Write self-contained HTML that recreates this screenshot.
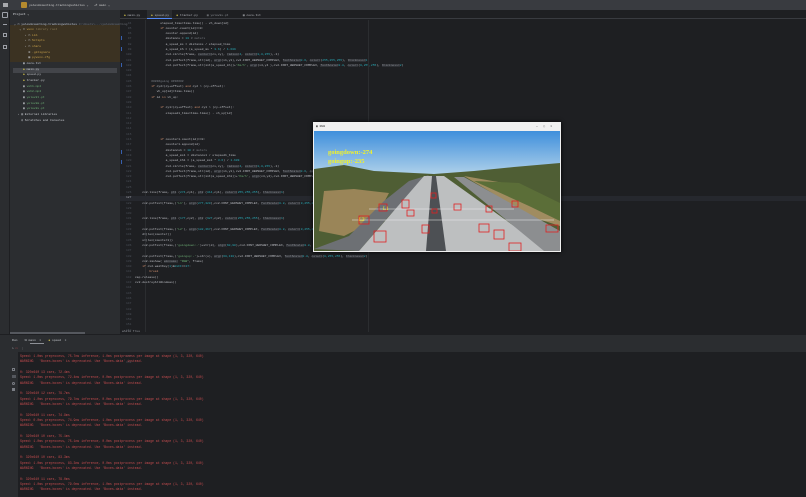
<!DOCTYPE html>
<html><head><meta charset="utf-8"><style>
*{margin:0;padding:0;box-sizing:border-box}
body{width:806px;height:497px;overflow:hidden;background:#1e1f22;font-family:"Liberation Mono",monospace;position:relative}
.a{position:absolute}
.t{position:absolute;white-space:pre;font-size:3px;line-height:5.3px}
.k{color:#cf8e6d}.s{color:#6aab73}.n{color:#2aacb8}.c{color:#7a7e85}.p{color:#8b8e94;background:#2e3035}
.w{color:#bcbec4}
.con{position:absolute;left:20px;white-space:pre;font-size:3.2px;line-height:5.33px;color:#c64c4f}
</style></head><body>
<!-- title bar -->
<div class="a" style="left:0;top:0;width:806px;height:10px;background:#393b40"></div>
<div class="a" style="left:3px;top:3px;width:5px;height:4px;background:#a8a9ad"></div>
<div class="a" style="left:21px;top:2px;width:6px;height:6px;background:#b58a2e;border-radius:1px"></div>
<div class="t" style="left:29px;top:2.5px;color:#d0d0d0">yolov8counting-trackingvehicles ⌄   ⎇ main ⌄</div>
<!-- left strip -->
<div class="a" style="left:0;top:10px;width:10px;height:487px;background:#2b2d30;border-right:1px solid #1e1f22"></div>
<div class="a" style="left:2px;top:12px;width:6px;height:6px;border:1px solid #9da0a8;border-radius:1px"></div>
<div class="a" style="left:3px;top:24px;width:4px;height:1px;background:#9da0a8"></div>
<div class="a" style="left:3px;top:33px;width:4px;height:4px;border:1px solid #9da0a8"></div>
<div class="a" style="left:3px;top:45px;width:4px;height:4px;border:1px solid #9da0a8"></div>
<div class="a" style="left:3px;top:439px;width:4px;height:4px;border:1px solid #8c8f96;border-radius:50%"></div>
<div class="a" style="left:3px;top:448px;width:4px;height:4px;border:1px solid #b0b3b9;background:#43454a"></div>
<div class="a" style="left:3px;top:458px;width:4px;height:4px;border:1px solid #8c8f96"></div>
<div class="a" style="left:3px;top:468px;width:4px;height:4px;border:1px solid #8c8f96;border-radius:50%"></div>
<div class="a" style="left:3px;top:478px;width:4px;height:4px;border:1px solid #8c8f96"></div>
<div class="a" style="left:3px;top:487px;width:4px;height:4px;border:1px solid #8c8f96;border-radius:50%"></div>
<!-- project panel -->
<div class="a" style="left:10px;top:10px;width:110px;height:324px;background:#2b2d30"></div>
<div class="a" style="left:10px;top:25px;width:110px;height:37px;background:#3b3222"></div>
<div class="a" style="left:13px;top:68px;width:104px;height:5px;background:#43454a"></div>
<div class="t" style="left:13px;top:12px;color:#dfe1e5">Project ⌄</div>
<div class="t" style="left:14px;top:21.5px;line-height:5.65px;color:#c9ccd1">⌄ ▭ yolov8counting-trackingvehicles <span style="color:#6f737a">C:\Users\...\yolov8counting</span>
   ⌄ ▭ <span style="color:#c9a24b">venv</span> <span style="color:#8a7a55">library root</span>
      › ▭ <span style="color:#c9a24b">Lib</span>
      › ▭ <span style="color:#c9a24b">Scripts</span>
      › ▭ <span style="color:#c9a24b">share</span>
        ⚙ <span style="color:#c9a24b">.gitignore</span>
        ▤ <span style="color:#c9a24b">pyvenv.cfg</span>
     ▤ coco.txt
     <span style="color:#d4c54a">◆</span> main.py
     <span style="color:#d4c54a">◆</span> speed.py
     <span style="color:#d4c54a">◆</span> tracker.py
     ▤ <span style="color:#6aab73">veh1.mp4</span>
     ▤ <span style="color:#6aab73">veh2.mp4</span>
     ▤ <span style="color:#6aab73">yolov8l.pt</span>
     ▤ <span style="color:#6aab73">yolov8m.pt</span>
     ▤ <span style="color:#6aab73">yolov8s.pt</span>
  › ▥ External Libraries
    ◎ Scratches and Consoles</div>
<div class="a" style="left:10px;top:332px;width:75px;height:2px;background:#55585e"></div>
<!-- editor -->
<div class="a" style="left:120px;top:10px;width:686px;height:9px;background:#1e1f22;border-bottom:1px solid #393b40"></div>
<div class="a" style="left:147px;top:10px;width:25px;height:9px;background:#2b2d30;border-bottom:1px solid #548af7"></div>
<div class="t" style="left:124px;top:12.5px;color:#b8bac0"><span style="color:#d4c54a">◆</span> main.py      <span style="color:#d4c54a">◆</span> speed.py    <span style="color:#d4c54a">◆</span> tracker.py     <span style="color:#8a8d93">▤ yolov8s.pt</span>        ▤ coco.txt</div>
<div class="a" style="left:145px;top:20px;width:1px;height:312px;background:#2b2d30"></div>
<div class="a" style="left:120px;top:196px;width:686px;height:5px;background:#26282e"></div>
<div class="a" style="left:121px;top:36px;width:1px;height:4px;background:#375fad"></div>
<div class="a" style="left:121px;top:47px;width:1px;height:4px;background:#375fad"></div>
<div class="a" style="left:121px;top:63px;width:1px;height:4px;background:#375fad"></div>
<div class="a" style="left:121px;top:150px;width:1px;height:4px;background:#375fad"></div>
<div class="a" style="left:121px;top:160px;width:1px;height:4px;background:#375fad"></div>
<div class="t" style="left:126px;top:20.5px;color:#4b5059"> 94
 95
 96
 97
 98
 99
100
101
102
103
104
105
106
107
108
109
110
111
112
113
114
115
116
117
118
119
120
121
122
123
124
125
126
<span style="color:#a1a3ab">127</span>
128
129
130
131
132
133
134
135
136
137
138
139
140
141
142
143
144
145
146
147
148
149
150
151
152
153
154
155
156
157
158</div>
<div class="t w" style="left:135px;top:20.5px">              elapsed_time=time.time() - vh_down[id]
              <span class="k">if</span> counter.count(id)==0:
                 counter.append(id)
                 distance = <span class="n">10</span> <span class="c"># meters</span>
                 a_speed_ms = distance / elapsed_time
                 a_speed_kh = (a_speed_ms * <span class="n">3.6</span>) / <span class="n">1.609</span>
                 cv2.circle(frame, <span class="p">center=</span>(cx,cy), <span class="p">radius=</span><span class="n">4</span>, <span class="p">color=</span>(<span class="n">0,0,255</span>),-1)
                 cv2.putText(frame,str(id), <span class="p">org=</span>(x1,y1),cv2.FONT_HERSHEY_COMPLEX, <span class="p">fontScale=</span><span class="n">0.6</span>, <span class="p">color=</span>(<span class="n">255,255,255</span>), <span class="p">thickness=</span><span class="n">1</span>)
                 cv2.putText(frame,str(int(a_speed_kh))+<span class="s">'Km/h'</span>, <span class="p">org=</span>(x4,y4 ),cv2.FONT_HERSHEY_COMPLEX, <span class="p">fontScale=</span><span class="n">0.8</span>, <span class="p">color=</span>(<span class="n">0,255,255</span>), <span class="p">thickness=</span><span class="n">2</span>)


         <span class="c">#####going UP#####</span>
         <span class="k">if</span> cy2&lt;(cy+offset) <span class="k">and</span> cy2 &gt; (cy-offset):
            vh_up[id]=time.time()
         <span class="k">if</span> id <span class="k">in</span> vh_up:

              <span class="k">if</span> cy1&lt;(cy+offset) <span class="k">and</span> cy1 &gt; (cy-offset):
                 elapsed1_time=time.time() - vh_up[id]




              <span class="k">if</span> counter1.count(id)==0:
                 counter1.append(id)
                 distance1 = <span class="n">10</span> <span class="c"># meters</span>
                 a_speed_ms1 = distance1 / elapsed1_time
                 a_speed_kh1 = (a_speed_ms1 * <span class="n">3.6</span>) / <span class="n">1.609</span>
                 cv2.circle(frame, <span class="p">center=</span>(cx,cy), <span class="p">radius=</span><span class="n">4</span>, <span class="p">color=</span>(<span class="n">0,0,255</span>),-1)
                 cv2.putText(frame,str(id), <span class="p">org=</span>(x1,y1),cv2.FONT_HERSHEY_COMPLEX, <span class="p">fontScale=</span><span class="n">0.6</span>, <span class="p">color=</span>(<span class="n">255,255,255</span>), <span class="p">thickness=</span><span class="n">1</span>)
                 cv2.putText(frame,str(int(a_speed_kh1))+<span class="s">'Km/h'</span>, <span class="p">org=</span>(x4,y4),cv2.FONT_HERSHEY_COMPLEX, <span class="p">fontScale=</span><span class="n">0.8</span>, <span class="p">color=</span>(<span class="n">0,255,255</span>), <span class="p">thickness=</span><span class="n">2</span>)


    cv2.line(frame, <span class="p">pt1</span> (<span class="n">274</span>,cy1), <span class="p">pt2</span> (<span class="n">814</span>,cy1), <span class="p">color=</span>(<span class="n">255,255,255</span>), <span class="p">thickness=</span><span class="n">1</span>)

    cv2.putText(frame,(<span class="s">'L1'</span>), <span class="p">org=</span>(<span class="n">277,320</span>),cv2.FONT_HERSHEY_COMPLEX, <span class="p">fontScale=</span><span class="n">0.8</span>, <span class="p">color=</span>(<span class="n">0,255,255</span>), <span class="p">thickness=</span><span class="n">2</span>)


    cv2.line(frame, <span class="p">pt1</span> (<span class="n">177</span>,cy2), <span class="p">pt2</span> (<span class="n">927</span>,cy2), <span class="p">color=</span>(<span class="n">255,255,255</span>), <span class="p">thickness=</span><span class="n">1</span>)

    cv2.putText(frame,(<span class="s">'L2'</span>), <span class="p">org=</span>(<span class="n">182,367</span>),cv2.FONT_HERSHEY_COMPLEX, <span class="p">fontScale=</span><span class="n">0.8</span>, <span class="p">color=</span>(<span class="n">0,255,255</span>), <span class="p">thickness=</span><span class="n">2</span>)
    d=(len(counter))
    u=(len(counter1))
    cv2.putText(frame,(<span class="s">'goingdown:-'</span>)+str(d), <span class="p">org=</span>(<span class="n">60,90</span>),cv2.FONT_HERSHEY_COMPLEX, <span class="p">fontScale=</span><span class="n">0.8</span>, <span class="p">color=</span>(<span class="n">0,255,255</span>), <span class="p">thickness=</span><span class="n">2</span>)

    cv2.putText(frame,(<span class="s">'goingup:-'</span>)+str(u), <span class="p">org=</span>(<span class="n">60,130</span>),cv2.FONT_HERSHEY_COMPLEX, <span class="p">fontScale=</span><span class="n">0.8</span>, <span class="p">color=</span>(<span class="n">0,255,255</span>), <span class="p">thickness=</span><span class="n">2</span>)
    cv2.imshow( <span class="p">winname:</span> <span class="s">"RGB"</span>, frame)
    <span class="k">if</span> cv2.waitKey(<span class="n">1</span>)&amp;<span class="n">0xFF</span>==<span class="n">27</span>:
        <span class="k">break</span>
cap.release()
cv2.destroyAllWindows()</div>
<div class="a" style="left:368px;top:20px;width:1px;height:312px;background:#2b2d30"></div>
<div class="t" style="left:122px;top:328.5px;color:#9a9da3">while True</div>
<!-- run panel -->
<div class="a" style="left:0;top:334px;width:806px;height:18px;background:#2b2d30;border-top:1px solid #1e1f22"></div>
<div class="a" style="left:10px;top:333px;width:44px;height:1px;background:#55585e"></div>
<div class="t" style="left:12px;top:337.5px;color:#c9ccd1">Run    ⧉ main  ×    <span style="color:#d4c54a">◆</span> speed  ×</div>
<div class="a" style="left:30px;top:343px;width:14px;height:1px;background:#8d9096"></div>
<div class="t" style="left:12px;top:346px;color:#8c8f96">↻ <span style="color:#c64c4f">◻</span>  ⋮</div>
<div class="a" style="left:0;top:352px;width:18px;height:145px;background:#2b2d30"></div>
<div class="a" style="left:12px;top:368px;width:3px;height:3px;border:1px solid #7a7d84"></div>
<div class="a" style="left:12px;top:375px;width:4px;height:3px;background:#55585e"></div>
<div class="a" style="left:12px;top:382px;width:3px;height:3px;border:1px solid #7a7d84;border-radius:50%"></div>
<div class="a" style="left:12px;top:388px;width:3px;height:3px;background:#7a7d84"></div>
<div class="con" style="top:354px">Speed: 1.0ms preprocess, 75.7ms inference, 1.0ms postprocess per image at shape (1, 3, 320, 640)
WARNING   'Boxes.boxes' is deprecated. Use 'Boxes.data' instead.

0: 320x640 13 cars, 72.4ms
Speed: 1.0ms preprocess, 72.4ms inference, 0.0ms postprocess per image at shape (1, 3, 320, 640)
WARNING   'Boxes.boxes' is deprecated. Use 'Boxes.data' instead.

0: 320x640 12 cars, 79.7ms
Speed: 1.0ms preprocess, 79.7ms inference, 0.0ms postprocess per image at shape (1, 3, 320, 640)
WARNING   'Boxes.boxes' is deprecated. Use 'Boxes.data' instead.

0: 320x640 11 cars, 74.9ms
Speed: 0.0ms preprocess, 74.9ms inference, 1.0ms postprocess per image at shape (1, 3, 320, 640)
WARNING   'Boxes.boxes' is deprecated. Use 'Boxes.data' instead.

0: 320x640 10 cars, 75.1ms
Speed: 1.0ms preprocess, 75.1ms inference, 0.0ms postprocess per image at shape (1, 3, 320, 640)
WARNING   'Boxes.boxes' is deprecated. Use 'Boxes.data' instead.

0: 320x640 10 cars, 83.3ms
Speed: 1.0ms preprocess, 83.3ms inference, 0.0ms postprocess per image at shape (1, 3, 320, 640)
WARNING   'Boxes.boxes' is deprecated. Use 'Boxes.data' instead.

0: 320x640 11 cars, 79.0ms
Speed: 1.0ms preprocess, 79.0ms inference, 1.0ms postprocess per image at shape (1, 3, 320, 640)
WARNING   'Boxes.boxes' is deprecated. Use 'Boxes.data' instead.</div>
<!-- RGB window -->
<div class="a" style="left:313px;top:122px;width:248px;height:130px;background:#f0f0f0;box-shadow:0 0 4px #000"></div>
<div class="t" style="left:316px;top:124px;color:#333">▣ RGB</div>
<div class="t" style="left:536px;top:124px;color:#444">─   ▢   ✕</div>
<svg class="a" style="left:314px;top:131px" width="246" height="120" viewBox="0 0 246 120">
<defs><linearGradient id="sky" x1="0" y1="0" x2="0" y2="1"><stop offset="0" stop-color="#3f8fdc"/><stop offset="1" stop-color="#b3d3ea"/></linearGradient></defs>
<rect width="246" height="45" fill="url(#sky)"/>
<polygon points="0,38 30,34 60,40 120,43 160,40 200,36 246,32 246,120 0,120" fill="#4f5e34"/>
<polygon points="10,60 40,58 75,62 60,90 30,105 5,100" fill="#9a8558"/>
<polygon points="150,45 190,52 215,70 246,82 246,95 215,85 175,60" fill="#a08c60"/>
<polygon points="0,118 35,105 70,70 95,50 115,44 75,85 45,120" fill="#6d7074"/>
<polygon points="45,120 110,45 130,45 235,120" fill="#bdbfc0"/>
<polygon points="112,120 118,45 122,45 132,120" fill="#4d5054"/>
<polygon points="230,120 140,46 150,46 246,100 246,120" fill="#8c8e90"/>
<polygon points="160,50 205,52 246,72 246,90 215,75" fill="#5b6e38"/>
<line x1="55" y1="78" x2="200" y2="78" stroke="#eee" stroke-width="0.6"/>
<line x1="38" y1="89" x2="240" y2="89" stroke="#eee" stroke-width="0.6"/>
<g fill="none" stroke="#e02020" stroke-width="0.8">
<rect x="60" y="100" width="12" height="11"/><rect x="45" y="85" width="10" height="8"/><rect x="65" y="73" width="8" height="7"/>
<rect x="88" y="69" width="7" height="8"/><rect x="108" y="94" width="7" height="8"/><rect x="165" y="93" width="10" height="8"/>
<rect x="180" y="99" width="10" height="9"/><rect x="140" y="73" width="7" height="6"/><rect x="172" y="75" width="6" height="6"/>
<rect x="195" y="112" width="12" height="8"/><rect x="198" y="70" width="6" height="6"/><rect x="232" y="94" width="12" height="7"/>
<rect x="93" y="79" width="7" height="6"/><rect x="118" y="78" width="5" height="4"/><rect x="117" y="62" width="5" height="5"/>
</g>
<text x="14" y="23" font-family="Liberation Serif" font-size="6.5" fill="#f2f22a" font-weight="bold">goingdown:-274</text>
<text x="14" y="32" font-family="Liberation Serif" font-size="6.5" fill="#f2f22a" font-weight="bold">goingup:-235</text>
<text x="69" y="79" font-family="Liberation Serif" font-size="5" fill="#f2f22a">L1</text>
<text x="45" y="90" font-family="Liberation Serif" font-size="5" fill="#f2f22a">L2</text>
</svg>
</body></html>
